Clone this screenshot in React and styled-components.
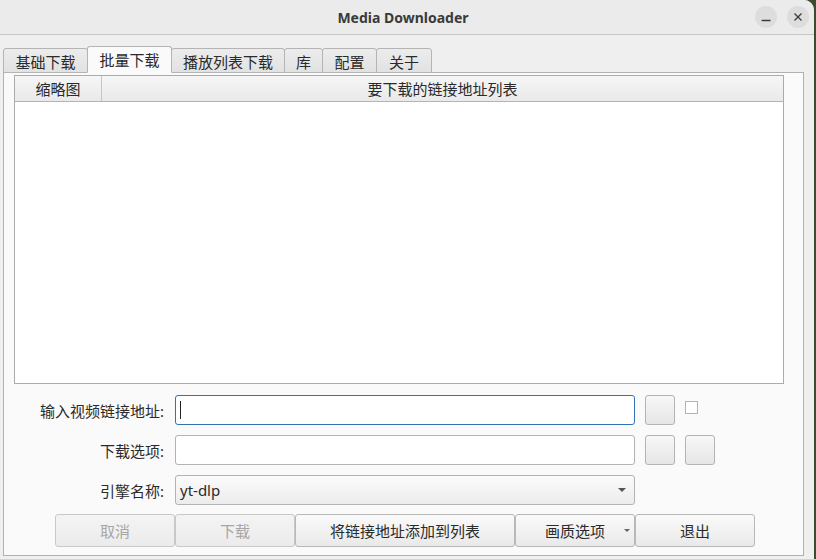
import styled, { createGlobalStyle } from "styled-components";

const GlobalStyle = createGlobalStyle`
  html, body {
    margin: 0;
    padding: 0;
    background: #3c4a2e;
    overflow: hidden;
  }
  * {
    box-sizing: border-box;
  }
`;

const tabs = ["基础下载", "批量下载", "播放列表下载", "库", "配置", "关于"];
const tabWidths = [85, 85, 114, 39, 55, 56];

const App = () => {
  return (
    <>
      <GlobalStyle />
      <Window>
        <TitleBar>
          <Title>Media Downloader</Title>
          <WinButtons>
            <WinButton aria-label="minimize">
              <svg width="12" height="12" viewBox="0 0 12 12">
                <path d="M1.5 9.5h9" stroke="#3a3a3a" strokeWidth="1.3" />
              </svg>
            </WinButton>
            <WinButton aria-label="close">
              <svg width="12" height="12" viewBox="0 0 12 12">
                <path
                  d="M2.5 2.5l7 7M9.5 2.5l-7 7"
                  stroke="#3a3a3a"
                  strokeWidth="1.3"
                />
              </svg>
            </WinButton>
          </WinButtons>
        </TitleBar>

        <Body>
          <TabBar>
            {tabs.map((t, i) => (
              <Tab key={t} $active={i === 1} style={{ width: tabWidths[i] }}>
                {t}
              </Tab>
            ))}
          </TabBar>

          <Pane>
            <Table>
              <HeaderRow>
                <HeaderCell $w="87px">缩略图</HeaderCell>
                <HeaderCell $grow>要下载的链接地址列表</HeaderCell>
              </HeaderRow>
              <TableBody />
            </Table>

            <Form>
              <FormRow>
                <Label>输入视频链接地址:</Label>
                <TextInput $focused>
                  <Caret />
                </TextInput>
                <SquareButton />
                <CheckBox />
              </FormRow>
              <FormRow>
                <Label>下载选项:</Label>
                <TextInput />
                <SquareButton />
                <SquareButton />
              </FormRow>
              <FormRow>
                <Label>引擎名称:</Label>
                <Combo>
                  <span>yt-dlp</span>
                  <Arrow />
                </Combo>
              </FormRow>
            </Form>

            <ButtonRow>
              <PushButton $w="120px" disabled>
                取消
              </PushButton>
              <PushButton $w="120px" disabled>
                下载
              </PushButton>
              <PushButton $w="220px">将链接地址添加到列表</PushButton>
              <PushButton $w="120px">
                画质选项
                <MenuArrow />
              </PushButton>
              <PushButton $w="120px">退出</PushButton>
            </ButtonRow>
          </Pane>
        </Body>
      </Window>
    </>
  );
};

export default App;

const cjk = `"Noto Sans", "Noto Sans CJK SC", sans-serif`;

const Window = styled.div`
  width: 814px;
  height: 559px;
  background: #efefef;
  border-top-right-radius: 10px;
  display: flex;
  flex-direction: column;
  font-family: ${cjk};
  font-size: 15px;
  color: #2e2e2e;
  overflow: hidden;
`;

const TitleBar = styled.div`
  height: 35px;
  flex: 0 0 auto;
  position: relative;
  display: flex;
  align-items: center;
  justify-content: center;
  background: #ebebeb;
  border-bottom: 1px solid #c4c4c4;
`;

const Title = styled.div`
  font-family: "Noto Sans", "DejaVu Sans", sans-serif;
  font-weight: 700;
  font-size: 14px;
  color: #3a3a3a;
  margin-left: -8px;
`;

const WinButtons = styled.div`
  position: absolute;
  right: 5px;
  top: 6px;
  display: flex;
  gap: 10px;
`;

const WinButton = styled.div`
  width: 22px;
  height: 22px;
  border-radius: 50%;
  background: #dddddd;
  display: flex;
  align-items: center;
  justify-content: center;
`;

const Body = styled.div`
  flex: 1;
  display: flex;
  flex-direction: column;
  padding: 11px 10px 3px 3px;
`;

const TabBar = styled.div`
  display: flex;
  align-items: flex-end;
  height: 27px;
  position: relative;
  z-index: 1;
  margin-bottom: -1px;
`;

const Tab = styled.div`
  height: ${(p) => (p.$active ? "27px" : "25px")};
  display: flex;
  align-items: center;
  justify-content: center;
  padding-top: ${(p) => (p.$active ? "0" : "1px")};
  margin-right: -1px;
  border: 1px solid #b4b4b4;
  border-bottom: ${(p) => (p.$active ? "1px solid #fafafa" : "1px solid #b4b4b4")};
  border-radius: 3px 3px 0 0;
  background: ${(p) =>
    p.$active ? "#fafafa" : "linear-gradient(#ececec, #e2e2e2)"};
  color: #2a2a2a;
  font-size: 15px;
  position: relative;
  z-index: ${(p) => (p.$active ? 2 : 1)};
`;

const Pane = styled.div`
  flex: 1;
  background: #fafafa;
  border: 1px solid #b0b0b0;
  padding: 2px 19px 7px 10px;
  display: flex;
  flex-direction: column;
`;

const Table = styled.div`
  width: 770px;
  height: 309px;
  border: 1px solid #ababab;
  background: #ffffff;
  display: flex;
  flex-direction: column;
`;

const HeaderRow = styled.div`
  display: flex;
  height: 26px;
  background: linear-gradient(#f6f6f6, #e9e9e9);
  border-bottom: 1px solid #b4b4b4;
`;

const HeaderCell = styled.div`
  width: ${(p) => p.$w || "auto"};
  flex: ${(p) => (p.$grow ? 1 : "0 0 auto")};
  display: flex;
  align-items: center;
  justify-content: center;
  border-right: ${(p) => (p.$grow ? "none" : "1px solid #c6c6c6")};
  font-size: 15px;
  color: #2a2a2a;
`;

const TableBody = styled.div`
  flex: 1;
  background: #ffffff;
`;

const Form = styled.div`
  display: flex;
  flex-direction: column;
  gap: 10px;
  margin-top: 11px;
`;

const FormRow = styled.div`
  display: flex;
  align-items: center;
  height: 30px;
`;

const Label = styled.div`
  width: 151px;
  text-align: right;
  padding-right: 1px;
  margin-right: 10px;
  font-size: 15px;
  color: #2a2a2a;
`;

const TextInput = styled.div`
  width: 460px;
  height: 30px;
  background: #ffffff;
  border: 1px solid ${(p) => (p.$focused ? "#2f73b5" : "#b3b3b3")};
  border-radius: 3px;
  display: flex;
  align-items: center;
  padding-left: 4px;
`;

const Caret = styled.div`
  width: 1px;
  height: 18px;
  background: #222;
`;

const SquareButton = styled.div`
  width: 30px;
  height: 30px;
  margin-left: 10px;
  border: 1px solid #b3b3b3;
  border-radius: 3px;
  background: linear-gradient(#f7f7f7, #e6e6e6);
`;

const CheckBox = styled.div`
  width: 13px;
  height: 13px;
  margin-left: 10px;
  margin-top: -6px;
  border: 1px solid #b3b3b3;
  background: #ffffff;
`;

const Combo = styled.div`
  width: 460px;
  height: 30px;
  border: 1px solid #b3b3b3;
  border-radius: 3px;
  background: linear-gradient(#fbfbfb, #ececec);
  display: flex;
  align-items: center;
  justify-content: space-between;
  padding: 0 8px 0 4px;
  font-family: "Noto Sans", "DejaVu Sans", sans-serif;
  font-size: 15px;
  color: #2a2a2a;
`;

const Arrow = styled.div`
  width: 0;
  height: 0;
  border-left: 4px solid transparent;
  border-right: 4px solid transparent;
  border-top: 4px solid #555;
`;

const MenuArrow = styled.span`
  position: absolute;
  right: 4px;
  top: 14px;
  width: 0;
  height: 0;
  border-left: 3px solid transparent;
  border-right: 3px solid transparent;
  border-top: 3px solid #666;
`;

const ButtonRow = styled.div`
  display: flex;
  margin-top: 9px;
  margin-left: 41px;
`;

const PushButton = styled.div`
  position: relative;
  width: ${(p) => p.$w};
  height: 33px;
  border: 1px solid #b8b8b8;
  border-radius: 3px;
  background: ${(p) =>
    p.disabled ? "linear-gradient(#f4f4f4, #ebebeb)" : "linear-gradient(#fafafa, #e9e9e9)"};
  display: flex;
  align-items: center;
  justify-content: center;
  font-size: 15px;
  color: ${(p) => (p.disabled ? "#a6a6a6" : "#2a2a2a")};
  border-color: ${(p) => (p.disabled ? "#c8c8c8" : "#b8b8b8")};
`;
